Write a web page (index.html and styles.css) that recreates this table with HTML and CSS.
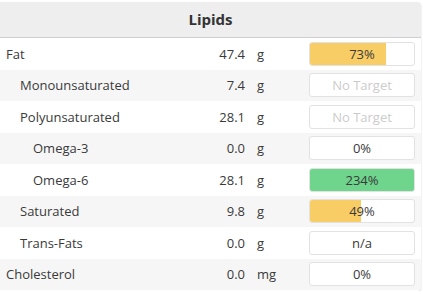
FILE: index.html
```html
<!DOCTYPE html>
<html>
<head>
<meta charset="utf-8">
<link rel="stylesheet" href="styles.css">
</head>
<body>
<div class="card">
  <div class="header">Lipids</div>
  <div class="row">
    <div class="name">Fat</div><div class="val">47.4</div><div class="unit">g</div>
    <div class="bar"><div class="fill yellow" style="width:73%"></div><span class="pct">73%</span></div>
  </div>
  <div class="row alt">
    <div class="name l1">Monounsaturated</div><div class="val">7.4</div><div class="unit">g</div>
    <div class="bar"><span class="pct none">No Target</span></div>
  </div>
  <div class="row">
    <div class="name l1">Polyunsaturated</div><div class="val">28.1</div><div class="unit">g</div>
    <div class="bar"><span class="pct none">No Target</span></div>
  </div>
  <div class="row alt">
    <div class="name l2">Omega-3</div><div class="val">0.0</div><div class="unit">g</div>
    <div class="bar"><span class="pct">0%</span></div>
  </div>
  <div class="row">
    <div class="name l2">Omega-6</div><div class="val">28.1</div><div class="unit">g</div>
    <div class="bar"><div class="fill green" style="width:100%"></div><span class="pct">234%</span></div>
  </div>
  <div class="row alt">
    <div class="name l1">Saturated</div><div class="val">9.8</div><div class="unit">g</div>
    <div class="bar"><div class="fill yellow" style="width:49%"></div><span class="pct">49%</span></div>
  </div>
  <div class="row">
    <div class="name l1">Trans-Fats</div><div class="val">0.0</div><div class="unit">g</div>
    <div class="bar"><span class="pct">n/a</span></div>
  </div>
  <div class="row alt">
    <div class="name">Cholesterol</div><div class="val">0.0</div><div class="unit">mg</div>
    <div class="bar"><span class="pct">0%</span></div>
  </div>
</div>
</body>
</html>
```
FILE: styles.css
```css
html, body {
  margin: 0;
  padding: 0;
  background: #ffffff;
}
body {
  padding-top: 2px;
  font-family: "Open Sans", "Liberation Sans", sans-serif;
  font-size: 13px;
  color: #3a3a3a;
}
.card {
  width: 421px;
  border-radius: 0 4px 4px 0;
  box-shadow: 0 1px 2px rgba(0, 0, 0, 0.18);
  overflow: hidden;
  padding-bottom: 1px;
}
.header {
  height: 35px;
  line-height: 35px;
  background: #eeeeee;
  border-bottom: 1px solid #cfcfcf;
  text-align: center;
  font-weight: 700;
  font-size: 15px;
  color: #333333;
}
.row {
  display: grid;
  grid-template-columns: 1fr 72px 52px 106px;
  align-items: center;
  height: 31.5px;
  padding: 0 6px;
  background: #ffffff;
}
.row.alt {
  background: #f6f6f6;
}
.name {
  white-space: nowrap;
}
.name.l1 { padding-left: 14px; }
.name.l2 { padding-left: 27px; }
.val {
  text-align: right;
  padding-right: 12px;
}
.bar {
  position: relative;
  height: 22px;
  border: 1px solid #e2e2e2;
  border-radius: 3px;
  background: #ffffff;
  overflow: hidden;
  display: flex;
  align-items: center;
  justify-content: center;
}
.fill {
  position: absolute;
  left: 0;
  top: 0;
  bottom: 0;
}
.fill.yellow { background: #f9cd66; }
.fill.green { background: #6fd48c; }
.pct {
  position: relative;
  color: #3a3a3a;
}
.pct.none {
  color: #cccccc;
}
```
